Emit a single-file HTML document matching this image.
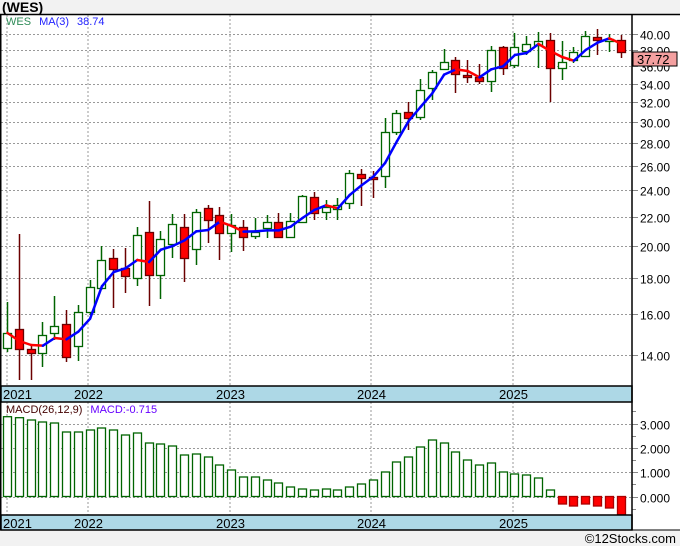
<!DOCTYPE html>
<html><head><meta charset="utf-8"><style>
html,body{margin:0;padding:0;background:#f2f2f2;width:680px;height:546px;overflow:hidden;font-family:"Liberation Sans",sans-serif}
</style></head><body>
<svg id="s" width="680" height="546" xmlns="http://www.w3.org/2000/svg" style="position:absolute;left:0;top:0">
<rect x="0" y="0" width="680" height="546" fill="#f2f2f2"/>
<text x="2" y="12" font-size="14" font-weight="bold" font-family="Liberation Sans,sans-serif" fill="#000">(WES)</text>
<rect x="0" y="14" width="680" height="516" fill="#fff"/>
<g id="g"></g>
<text x="676" y="543" font-size="13" text-anchor="end" font-family="Liberation Sans,sans-serif" fill="#000">©12Stocks.com</text>
</svg>
<script>
var g=document.getElementById('g'),h='';
function py(p){return 34+305.8*Math.log(40/p);}
// grid
var years=[[7,'2021'],[88,'2022'],[230,'2023'],[371,'2024'],[513,'2025']];
years.forEach(function(y){h+='<line x1="'+y[0]+'" y1="15" x2="'+y[0]+'" y2="386" stroke="#999" stroke-dasharray="2,2"/>';
h+='<line x1="'+y[0]+'" y1="402" x2="'+y[0]+'" y2="515" stroke="#999" stroke-dasharray="2,2"/>';});
for(var p=14;p<=40;p+=2){var y=Math.round(py(p))+.5;h+='<line x1="1" y1="'+y+'" x2="632" y2="'+y+'" stroke="#999" stroke-dasharray="2,2"/><line x1="632" y1="'+y+'" x2="638" y2="'+y+'" stroke="#888"/>';
if(p!=38&&p!=36)h+='<text x="640" y="'+(y+5)+'" font-size="12" fill="#000">'+p.toFixed(2)+'</text>';
else if(p==38)h+='<text x="640" y="'+(y+5)+'" font-size="12" fill="#000">38.00</text>';
else h+='<text x="640" y="'+(y+5)+'" font-size="12" fill="#000">36.00</text>';}
[[0,424],[1,447.5],[2,472],[3,496.5]].forEach(function(){});
var mz=496.5,mu=24.3;
[0,1,2,3].forEach(function(v){var y=Math.round(mz-v*mu)+.5;h+='<line x1="1" y1="'+y+'" x2="632" y2="'+y+'" stroke="#999" stroke-dasharray="2,2"/><line x1="632" y1="'+y+'" x2="638" y2="'+y+'" stroke="#888"/><text x="640" y="'+(y+5)+'" font-size="12">'+v.toFixed(3)+'</text>';});
[-0.5,0.5,1.5,2.5,3.5].forEach(function(v){var y=Math.round(mz-v*mu)+.5;h+='<line x1="632" y1="'+y+'" x2="636" y2="'+y+'" stroke="#888"/>';});
// candles [top,bottom,color,wt,wb]
var C=[[333,348,'g',302,352],[329,349,'r',234,380],[349,353,'r',345,380],[335,353,'g',322,367],[326,333,'g',296,340],[324,357,'r',310,362],[312,346,'g',305,361],[287,312,'g',280,315],[260,288,'g',246,290],[258,269,'r',249,308],[268,276,'r',248,293],[235,278,'g',227,286],[232,275,'r',201,306],[239,275,'g',231,299],[224,244,'g',214,258],[227,258,'r',214,282],[212,249,'g',209,265],[208,220,'r',205,243],[215,233,'r',207,260],[225,233,'g',214,252],[227,237,'r',220,251],[232,236,'g',218,239],[222,228,'g',215,238],[222,237,'r',213,238],[221,237,'g',213,238],[196,222,'g',195,223],[197,213,'r',192,220],[207,212,'g',200,220],[205,209,'g',198,220],[173,203,'g',170,209],[174,178,'r',169,206],[177,179,'r',171,198],[132,176,'g',118,188],[113,132,'g',110,135],[112,118,'r',102,130],[90,117,'g',79,120],[72,88,'g',70,100],[62,69,'g',49,70],[60,74,'r',57,93],[75,77,'r',60,83],[77,81,'r',64,84],[50,81,'g',46,92],[47,68,'r',46,75],[47,65,'g',33,68],[44,51,'g',36,55],[41,45,'g',32,68],[40,68,'r',33,102],[62,68,'g',41,80],[52,60,'g',47,63],[36,56,'g',31,57],[37,40,'r',29,55],[39,41,'g',34,52],[40,52,'r',35,58]];
var cl=[];
C.forEach(function(c,i){var x=Math.round(7+i*11.8);var col=c[2]=='g'?'#006400':'#6b0000';
h+='<line x1="'+(x+.5)+'" y1="'+c[3]+'" x2="'+(x+.5)+'" y2="'+c[4]+'" stroke="'+col+'" stroke-width="1.5"/>';
h+='<rect x="'+(x-3.5)+'" y="'+c[0]+'.5" width="8" height="'+Math.max(1,c[1]-c[0])+'" fill="'+(c[2]=='g'?'#fff':'#f00')+'" stroke="'+col+'" stroke-width="1.3"/>';
cl.push(c[2]=='g'?c[0]:c[1]);});
// MA
var ma=[];for(var i=0;i<cl.length;i++){var a=cl.slice(Math.max(0,i-2),i+1);ma.push(a.reduce(function(s,v){return s+v},0)/a.length);}
for(var i=1;i<ma.length;i++){var x0=7+(i-1)*11.8+.5,x1=7+i*11.8+.5;h+='<line x1="'+x0+'" y1="'+ma[i-1]+'" x2="'+x1+'" y2="'+ma[i]+'" stroke="'+(ma[i]>ma[i-1]+0.3?'#f00':'#00f')+'" stroke-width="2.5" stroke-linecap="round"/>';}
// macd
var M=[416.7,417.7,420,422,423,432,432,430,428,430,435,433,443,444,446,455,454,457,465,470,477,477,480,483,487,489,490,489,490,487,484,480,472,462,457,447,440,443,452,460,465,463,472,474,475,478,490,504,506,504,506,508,515];
M.forEach(function(t,i){var x=Math.round(7+i*11.8);var neg=t>mz;var y0=neg?mz:t,hh=Math.abs(t-mz);
h+='<rect x="'+(x-3.5)+'" y="'+y0+'" width="8" height="'+hh+'" fill="'+(neg?'#f00':'#fff')+'" stroke="'+(neg?'#a00':'#006400')+'" stroke-width="1.3"/>';});
// bands
h+='<rect x="1" y="386" width="631" height="16" fill="#add8e6" stroke="#000" stroke-width="1.5"/>';
h+='<rect x="1" y="515" width="631" height="15" fill="#add8e6" stroke="#000" stroke-width="1.5"/>';
years.forEach(function(y){var x=y[0]<20?3:y[0]-14;h+='<text x="'+x+'" y="399" font-size="13" fill="#000">'+y[1]+'</text><text x="'+x+'" y="528" font-size="13" fill="#000">'+y[1]+'</text>';});
// borders
h+='<line x1="0" y1="14.5" x2="680" y2="14.5" stroke="#000" stroke-width="1.5"/>';
h+='<line x1="0.75" y1="14" x2="0.75" y2="530" stroke="#000" stroke-width="1.5"/>';
h+='<line x1="632" y1="14" x2="632" y2="530" stroke="#000" stroke-width="1.5"/>';
h+='<line x1="0" y1="530" x2="680" y2="530" stroke="#000" stroke-width="1"/>';
// labels
h+='<text x="6" y="25" font-size="11"><tspan fill="#2e8b57">WES</tspan><tspan fill="#22f" dx="8">MA(3)</tspan><tspan fill="#22f" dx="8">38.74</tspan></text>';
h+='<text x="6" y="413" font-size="11"><tspan fill="#400">MACD(26,12,9)</tspan><tspan fill="#60f" dx="8">MACD:-0.715</tspan></text>';
h+='<rect x="633" y="52" width="44" height="14" fill="#f4a0a0" stroke="#000"/><text x="637" y="64" font-size="13" fill="#000">37.72</text>';
g.innerHTML=h;
</script>
</body></html>
